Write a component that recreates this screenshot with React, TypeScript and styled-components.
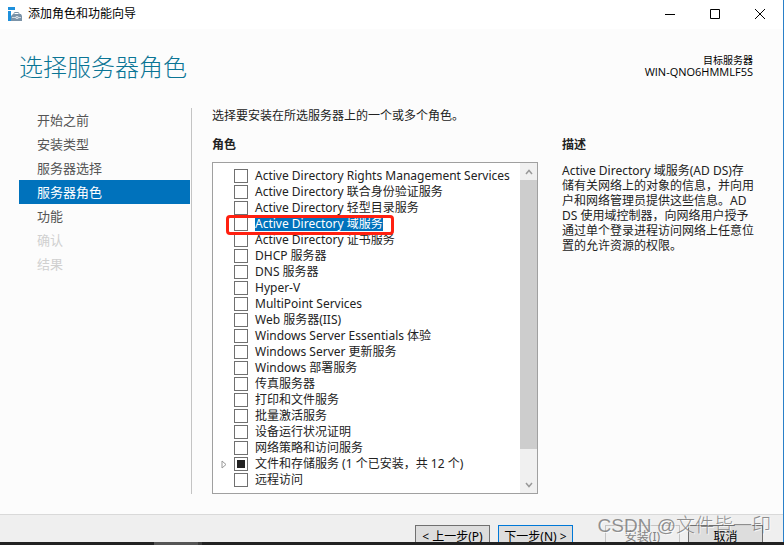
import React, { useEffect, useRef } from "react";
import styled, { createGlobalStyle } from "styled-components";

const GlobalStyle = createGlobalStyle`
  * { box-sizing: border-box; }
  body {
    margin: 0;
    overflow: hidden;
    background: #fcfcfc;
    color: #222;
    font: 12px/16px "Noto Sans", "Noto Sans CJK SC", sans-serif;
  }
  button { font: inherit; }
`;

const Window = styled.div`
  display: flex;
  flex-direction: column;
  height: 100vh;
  border-right: 1px solid #2a80c8;
`;

const TitleBar = styled.header`
  display: flex;
  align-items: center;
  flex: none;
  height: 29px;
  padding: 0 1px 2px 8px;
  gap: 6px;
  background: #fff;
  color: #000;
`;

const TitleText = styled.span`
  flex: 1;
`;

const Controls = styled.div`
  display: flex;
  align-self: stretch;
`;

const ControlButton = styled.button`
  width: 46px;
  padding: 0;
  margin-right: -1px;
  border: 0;
  background: none;
  display: flex;
  align-items: center;
  justify-content: center;
`;

const Heading = styled.div`
  display: flex;
  justify-content: space-between;
  align-items: flex-start;
  flex: none;
  height: 79px;
  padding: 24px 30px 0 19px;
`;

const PageTitle = styled.h1`
  margin: 0;
  color: #0b7595;
  font-size: 24px;
  line-height: 28px;
  font-weight: 300;
`;

const Target = styled.div`
  padding-top: 1px;
  color: #000;
  font-size: 10px;
  line-height: 12px;
  text-align: right;
`;

const ServerName = styled.div`
  font-family: "Open Sans", sans-serif;
  font-size: 11px;
`;

const Main = styled.div`
  display: flex;
  flex: 1;
  min-height: 0;
  padding: 0 24px 20px 19px;
`;

const Nav = styled.nav`
  flex: none;
  width: 173px;
  padding-right: 1px;
  border-right: 1px solid #c4c4c4;
`;

const NavItem = styled.a<{ $state?: "active" | "disabled" }>`
  display: block;
  padding-left: 18px;
  font-size: 13px;
  line-height: 24px;
  text-decoration: none;
  color: ${(p) => (p.$state === "active" ? "#fff" : p.$state === "disabled" ? "#d0d0d0" : "#555")};
  background: ${(p) => (p.$state === "active" ? "#0072bc" : "transparent")};
`;

const Roles = styled.section`
  display: flex;
  flex-direction: column;
  flex: 1;
  min-width: 0;
  padding-left: 20px;
`;

const Intro = styled.p`
  margin: 0 0 14px;
  line-height: 15px;
`;

const Subheading = styled.h2`
  margin: 0;
  font-size: 12px;
  line-height: 16px;
  font-weight: 700;
`;

const ListBox = styled.div`
  display: flex;
  flex: 1;
  min-height: 0;
  margin-top: 9px;
  border: 1px solid #a0a0a0;
  background: #fff;
`;

const List = styled.ul`
  flex: 1;
  min-width: 0;
  margin: 0;
  padding: 5px 0 0 7px;
  list-style: none;
  white-space: nowrap;
`;

const Row = styled.li`
  position: relative;
  display: flex;
  align-items: center;
  height: 16px;
`;

const Expander = styled.span`
  display: flex;
  align-items: center;
  width: 14px;
  height: 16px;
  padding-left: 1px;
`;

const Check = styled.input`
  appearance: none;
  flex: none;
  width: 14px;
  height: 14px;
  margin: 0 7px 0 0;
  border: 1px solid #707070;
  background: #fff;

  &:indeterminate {
    background: #222;
    box-shadow: inset 0 0 0 2px #fff;
  }
`;

const RowLabel = styled.label<{ $selected?: boolean }>`
  height: 14px;
  line-height: 14px;
  color: ${(p) => (p.$selected ? "#fff" : "inherit")};
  background: ${(p) => (p.$selected ? "#0072bc" : "transparent")};
`;

const Highlight = styled.span`
  position: absolute;
  z-index: 1;
  left: 6px;
  top: -1px;
  width: 168px;
  height: 20px;
  border: 3px solid #ff2010;
  border-radius: 4px;
  pointer-events: none;
`;

const ScrollBar = styled.div`
  display: flex;
  flex-direction: column;
  flex: none;
  width: 17px;
  background: #f0f0f0;
`;

const ScrollButton = styled.button`
  display: flex;
  align-items: center;
  justify-content: center;
  height: 17px;
  padding: 0;
  border: 0;
  background: none;
`;

const ScrollTrack = styled.div`
  flex: 1;
`;

const ScrollThumb = styled.div`
  height: 91%;
  background: #cdcdcd;
`;

const Description = styled.aside`
  flex: none;
  width: 197px;
  margin-left: 24px;
  padding-top: 29px;
`;

const DescriptionText = styled.p`
  margin: 10px 0 0;
  line-height: 15px;
  white-space: nowrap;
`;

const Footer = styled.footer`
  position: relative;
  display: flex;
  flex: none;
  justify-content: flex-end;
  align-items: flex-start;
  height: 28px;
  padding: 10px 20px 0 0;
  overflow: hidden;
  border-top: 1px solid #d9d9d9;
  background: #efefef;
`;

const WizardButton = styled.button<{ $primary?: boolean; $gap: number }>`
  width: 75px;
  height: 24px;
  padding: 0;
  margin-left: ${(p) => p.$gap}px;
  border: 1px solid ${(p) => (p.$primary ? "#0078d7" : "#707070")};
  background: #dddddd;
  color: #000;
  white-space: nowrap;

  &:disabled {
    border-color: #c4c4c4;
    background: #efefef;
    color: #838383;
  }
`;

const Watermark = styled.span`
  position: absolute;
  right: 12px;
  top: 0;
  color: rgba(110, 110, 110, 0.75);
  font: 19px/22px "Liberation Sans", "Noto Sans CJK SC", sans-serif;
  font-weight: 300;
  text-shadow: 1px 1px 0 rgba(255, 255, 255, 0.7);
  white-space: nowrap;
`;

const Taskbar = styled.div`
  display: flex;
  flex: none;
  height: 3px;
  margin-right: -1px;
  padding-left: 154px;
  background: #222;
`;

const TaskSlot = styled.span<{ $width: number; $color: string }>`
  width: ${(p) => p.$width}px;
  background: ${(p) => p.$color};
`;

const steps: { label: string; state?: "active" | "disabled" }[] = [
  { label: "开始之前" },
  { label: "安装类型" },
  { label: "服务器选择" },
  { label: "服务器角色", state: "active" },
  { label: "功能" },
  { label: "确认", state: "disabled" },
  { label: "结果", state: "disabled" },
];

const roles: { label: string; selected?: boolean; partial?: boolean }[] = [
  { label: "Active Directory Rights Management Services" },
  { label: "Active Directory 联合身份验证服务" },
  { label: "Active Directory 轻型目录服务" },
  { label: "Active Directory 域服务", selected: true },
  { label: "Active Directory 证书服务" },
  { label: "DHCP 服务器" },
  { label: "DNS 服务器" },
  { label: "Hyper-V" },
  { label: "MultiPoint Services" },
  { label: "Web 服务器(IIS)" },
  { label: "Windows Server Essentials 体验" },
  { label: "Windows Server 更新服务" },
  { label: "Windows 部署服务" },
  { label: "传真服务器" },
  { label: "打印和文件服务" },
  { label: "批量激活服务" },
  { label: "设备运行状况证明" },
  { label: "网络策略和访问服务" },
  { label: "文件和存储服务 (1 个已安装，共 12 个)", partial: true },
  { label: "远程访问" },
];

const description = [
  "Active Directory 域服务(AD DS)存",
  "储有关网络上的对象的信息，并向用",
  "户和网络管理员提供这些信息。AD",
  "DS 使用域控制器，向网络用户授予",
  "通过单个登录进程访问网络上任意位",
  "置的允许资源的权限。",
];

const AppIcon = () => (
  <svg width="14" height="14" viewBox="0 0 14 14" aria-hidden="true">
    <path d="M0 0h7v3H0zM0 4h3v10H0z" fill="#1e90dc" />
    <path d="M3 14V9l2-2h8l1 2v5z" fill="#7b93a8" />
    <path d="M6 8V6.5q0-1 1-1h3q1 0 1 1V8" fill="none" stroke="#7b93a8" />
    <path d="M4 10.5h4m2 0h3M8 9.5h2v2H8z" fill="none" stroke="#e4eaef" strokeWidth="0.8" />
  </svg>
);

function RoleRow({ label, selected, partial }: (typeof roles)[number]) {
  const ref = useRef<HTMLInputElement>(null);
  useEffect(() => {
    if (ref.current) ref.current.indeterminate = !!partial;
  }, [partial]);
  return (
    <Row>
      <Expander>
        {partial && (
          <svg width="6" height="9" viewBox="0 0 6 9" aria-hidden="true">
            <path d="M1 1v7l4-3.5z" fill="#fff" stroke="#999" />
          </svg>
        )}
      </Expander>
      <Check ref={ref} type="checkbox" id={label} />
      <RowLabel htmlFor={label} $selected={selected}>{label}</RowLabel>
      {selected && <Highlight />}
    </Row>
  );
}

export default function App() {
  return (
    <>
      <GlobalStyle />
      <Window lang="zh-CN">
        <TitleBar>
          <AppIcon />
          <TitleText>添加角色和功能向导</TitleText>
          <Controls>
            <ControlButton aria-label="最小化">
              <svg width="10" height="10"><path d="M0 5.5h10" stroke="#000" /></svg>
            </ControlButton>
            <ControlButton aria-label="最大化">
              <svg width="10" height="10"><path d="M.5.5h9v9h-9z" fill="none" stroke="#000" /></svg>
            </ControlButton>
            <ControlButton aria-label="关闭">
              <svg width="10" height="10"><path d="M0 0l10 10M10 0L0 10" stroke="#000" /></svg>
            </ControlButton>
          </Controls>
        </TitleBar>
        <Heading>
          <PageTitle>选择服务器角色</PageTitle>
          <Target>
            目标服务器
            <ServerName>WIN-QNO6HMMLF5S</ServerName>
          </Target>
        </Heading>
        <Main>
          <Nav>
            {steps.map((s) => (
              <NavItem key={s.label} href="#" $state={s.state}>{s.label}</NavItem>
            ))}
          </Nav>
          <Roles>
            <Intro>选择要安装在所选服务器上的一个或多个角色。</Intro>
            <Subheading>角色</Subheading>
            <ListBox>
              <List>
                {roles.map((r) => <RoleRow key={r.label} {...r} />)}
              </List>
              <ScrollBar>
                <ScrollButton aria-label="向上滚动">
                  <svg width="8" height="6"><path d="M1 5l3-3.5L7 5" fill="none" stroke="#999" strokeWidth="1.5" /></svg>
                </ScrollButton>
                <ScrollTrack><ScrollThumb /></ScrollTrack>
                <ScrollButton aria-label="向下滚动">
                  <svg width="8" height="6"><path d="M1 1l3 3.5L7 1" fill="none" stroke="#999" strokeWidth="1.5" /></svg>
                </ScrollButton>
              </ScrollBar>
            </ListBox>
          </Roles>
          <Description>
            <Subheading>描述</Subheading>
            <DescriptionText>
              {description.map((line) => (
                <React.Fragment key={line}>{line}<br /></React.Fragment>
              ))}
            </DescriptionText>
          </Description>
        </Main>
        <Footer>
          <WizardButton $gap={0}>&lt; 上一步(P)</WizardButton>
          <WizardButton $gap={8} $primary>下一步(N) &gt;</WizardButton>
          <WizardButton $gap={32} disabled>安装(I)</WizardButton>
          <WizardButton $gap={8}>取消</WizardButton>
          <Watermark>CSDN @文件皆一印</Watermark>
        </Footer>
        <Taskbar>
          <TaskSlot $width={44} $color="#555" />
          <TaskSlot $width={4} $color="#3c3c3c" />
        </Taskbar>
      </Window>
    </>
  );
}
